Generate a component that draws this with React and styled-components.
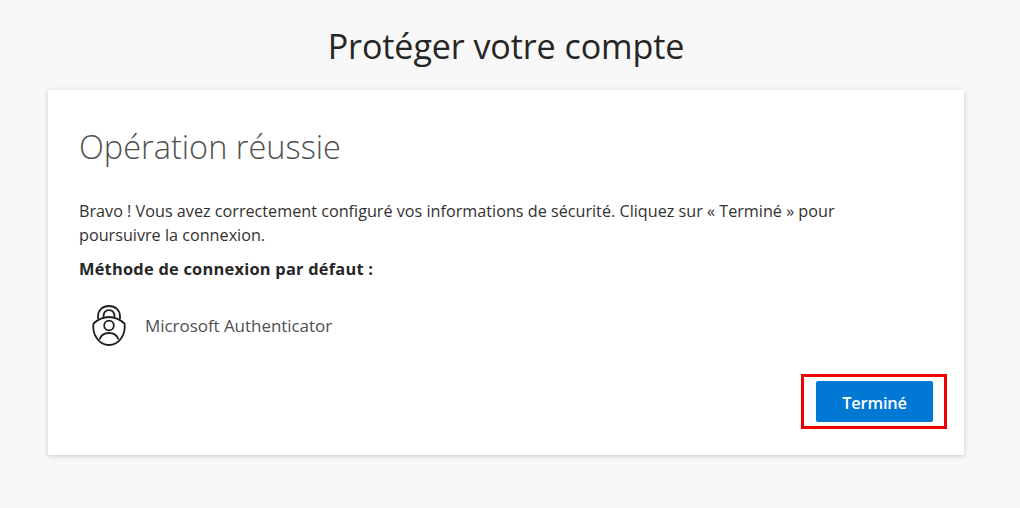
import React from 'react'
import styled, { createGlobalStyle } from 'styled-components'

const GlobalStyle = createGlobalStyle`
    html, body {
        margin: 0;
        padding: 0;
        background: #f8f8f8;
        font-family: "Open Sans", "Liberation Sans", sans-serif;
    }
`;

const Page = styled.div`
    width: 1020px;
    height: 508px;
    box-sizing: border-box;
    padding: 0 56px 0 48px;
    overflow: hidden;
`;

const PageTitle = styled.h1`
    margin: 0;
    height: 90px;
    line-height: 92px;
    text-align: center;
    font-size: 34.1px;
    font-weight: 400;
    letter-spacing: -0.1px;
    color: #262626;
`;

const Card = styled.section`
    height: 365px;
    box-sizing: border-box;
    padding: 34px 17px 0 31px;
    background: #fff;
    box-shadow: 0 1px 5px rgba(0, 0, 0, 0.2);
    display: flex;
    flex-direction: column;
`;

const Heading = styled.h2`
    margin: 0;
    font-size: 32.5px;
    line-height: 46px;
    font-weight: 300;
    color: #505050;
`;

const Message = styled.p`
    margin: 29px 0 0;
    font-size: 16.2px;
    line-height: 24px;
    color: #323130;
    max-width: 800px;
`;

const MethodLabel = styled.p`
    margin: 10px 0 0;
    font-size: 16.4px;
    line-height: 24px;
    font-weight: 700;
    letter-spacing: 0.24px;
    color: #262626;
`;

const MethodRow = styled.div`
    display: flex;
    align-items: center;
    gap: 17px;
    margin: 23px 0 0 13px;
`;

const MethodName = styled.span`
    font-size: 17px;
    letter-spacing: -0.05px;
    color: #505050;
`;

const Footer = styled.div`
    margin-top: auto;
    margin-bottom: 26px;
    display: flex;
    justify-content: flex-end;
`;

const Highlight = styled.div`
    border: 3px solid #f00000;
    padding: 4px 11px 4px 12px;
`;

const DoneButton = styled.button`
    display: block;
    width: 117px;
    height: 41px;
    padding: 2px 0 0;
    border: none;
    border-radius: 2px;
    background: #0078d4;
    color: #fff;
    font-family: inherit;
    font-size: 16.4px;
    font-weight: 600;
    letter-spacing: -0.2px;
`;

const AuthenticatorIcon = () => (
    <svg width="36" height="42" viewBox="0 0 36 42" fill="none" stroke="#1f1f1f" strokeWidth="1.8" style={{ flexShrink: 0 }}>
        <path d="M6 15 V12.500 C6 6 10.500 2 17 2 C23.500 2 28 6 28 12.500 V15" />
        <path d="M11.500 13 C11.500 8.500 13.500 6.200 17 6.200 C20.500 6.200 22.500 8.500 22.500 13" />
        <path d="M1.500 19.500 C6 15.500 11 13 17 13 C23 13 28 15.500 32.500 19.500 C34 31 27 41 17 41 C7 41 0 31 1.500 19.500 Z" />
        <circle cx="17" cy="21.500" r="4.800" />
        <path d="M7.500 35.500 C9 31 12.500 29 17 29 C21.500 29 25 31 26.500 35.500" />
    </svg>
);

function App() {
    return (
        <Page>
            <GlobalStyle />
            <PageTitle>Protéger votre compte</PageTitle>
            <Card>
                <Heading>Opération réussie</Heading>
                <Message>
                    Bravo ! Vous avez correctement configuré vos informations de sécurité. Cliquez sur « Terminé » pour poursuivre la connexion.
                </Message>
                <MethodLabel>Méthode de connexion par défaut :</MethodLabel>
                <MethodRow>
                    <AuthenticatorIcon />
                    <MethodName>Microsoft Authenticator</MethodName>
                </MethodRow>
                <Footer>
                    <Highlight>
                        <DoneButton>Terminé</DoneButton>
                    </Highlight>
                </Footer>
            </Card>
        </Page>
    )
}

export default App;
